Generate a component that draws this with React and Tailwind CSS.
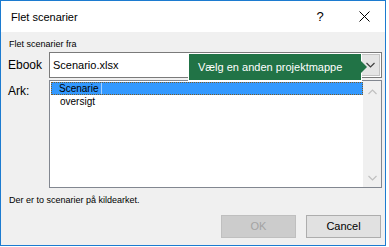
import React from 'react'

const ui = { fontFamily: '"Liberation Sans", Arial, sans-serif' }

function Chevron({ up = false, className = '' }) {
  return (
    <svg width="9" height="6" viewBox="0 0 9 6" className={className}>
      <path
        d={up ? 'M0.5 5 L4.5 1 L8.5 5' : 'M0.5 1 L4.5 5 L8.5 1'}
        fill="none"
        stroke="currentColor"
        strokeWidth="1.2"
      />
    </svg>
  )
}

export default function App() {
  return (
    <div className="w-[389px] h-[247px] bg-white" style={ui}>
      <div className="w-[386px] h-[246px] border border-[#1c7bd0] flex flex-col bg-[#f0f0f0]">
        {/* title bar */}
        <div className="h-[31px] bg-white flex items-center pl-[10px] shrink-0">
          <span className="text-[11px] text-black flex-1 leading-none pt-[1px]">Flet scenarier</span>
          <span className="text-[13px] text-black w-[20px] mr-[29px] text-center leading-none">?</span>
          <svg width="11" height="11" viewBox="0 0 11 11" className="mr-[15px]">
            <path d="M0.5 0.5 L10.5 10.5 M10.5 0.5 L0.5 10.5" stroke="#000" strokeWidth="1" />
          </svg>
        </div>

        {/* body */}
        <div className="flex-1 flex flex-col pl-[7px] pr-[3px] relative">
          <div className="text-[9px] text-black mt-[5px] leading-[14px] pl-[1px]">Flet scenarier fra</div>

          <div className="flex items-center mt-[1px] h-[26px]">
            <span className="text-[12px] text-black w-[41px] leading-none">Ebook</span>
            <div className="flex-1 h-[26px] bg-white border border-[#7a7a7a] flex items-center pl-[3px]">
              <span className="text-[11px] text-black flex-1 leading-none">Scenario.xlsx</span>
              <div className="w-[20px] h-[22px] mr-[1px] bg-[#e5e5e5] border border-[#c4c4c4] flex items-center justify-center text-[#404040]">
                <Chevron />
              </div>
            </div>
          </div>

          <div className="flex mt-[2px]">
            <span className="text-[12px] text-black w-[41px] leading-none pt-[5px]">Ark:</span>
            <div className="flex-1 h-[108px] bg-white border border-[#828790] flex">
              <div className="flex-1 pt-[1px] pl-[1px]">
                <div className="h-[13px] bg-[#3399ff] border border-dotted border-[#7a5a28] flex items-center pl-[7px] relative">
                  <span className="text-[10px] text-black leading-none">Scenarie</span>
                  <span className="absolute left-[49px] top-0 h-full w-px bg-[#a8d0ff]" />
                </div>
                <div className="h-[14px] flex items-center pl-[9px]">
                  <span className="text-[10px] text-black leading-none">oversigt</span>
                </div>
              </div>
              <div className="w-[18px] bg-[#f0f0f0] flex flex-col items-center justify-between pt-[8px] pb-[6px] text-[#c0c0c0]">
                <Chevron up />
                <Chevron />
              </div>
            </div>
          </div>

          <div className="text-[9px] text-black mt-[5px] leading-[14px] pl-[1px]">Der er to scenarier på kildearket.</div>

          <div className="flex justify-end gap-[10px] mt-[8px] mr-[1px]">
            <div className="w-[75px] h-[23px] bg-[#cccccc] border border-[#bfbfbf] flex items-center justify-center text-[11px] text-[#a3a3a3] leading-none">
              OK
            </div>
            <div className="w-[75px] h-[23px] bg-[#e1e1e1] border border-[#adadad] flex items-center justify-center text-[11px] text-black leading-none">
              Cancel
            </div>
          </div>

          {/* tooltip over the combo box */}
          <div className="absolute left-[187px] top-[21px] flex items-center">
            <div className="w-[174px] h-[28px] bg-[#217346] border border-white flex items-center pl-[9px]">
              <span className="text-[11px] text-white whitespace-nowrap leading-none">Vælg en anden projektmappe</span>
            </div>
            <div className="w-0 h-0 border-y-[6px] border-y-transparent border-l-[6px] border-l-[#217346] -ml-px" />
          </div>
        </div>
      </div>
    </div>
  )
}
